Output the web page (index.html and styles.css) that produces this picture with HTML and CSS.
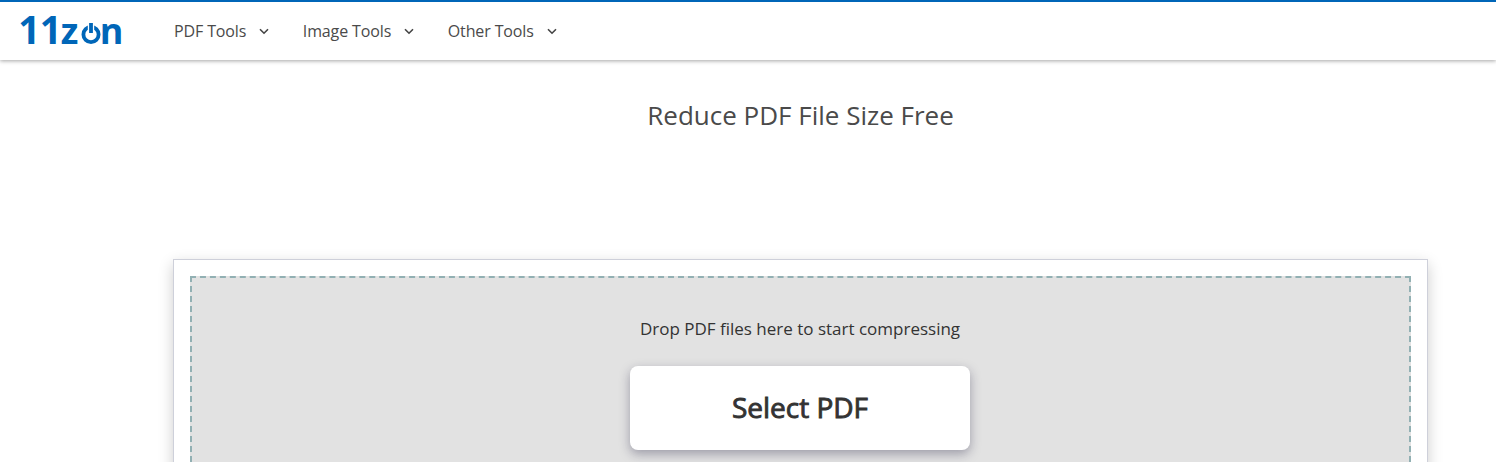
FILE: index.html
```html
<!DOCTYPE html>
<html lang="en">
<head>
  <meta charset="UTF-8" />
  <meta name="viewport" content="width=device-width, initial-scale=1.0"/>
  <title>Reduce PDF File Size Free</title>
  <link rel="stylesheet" href="styles.css">
</head>
<body>
  <header class="navbar">
    <a class="logo" href="#">
      <svg width="114" height="58" viewBox="0 0 114 58">
        <text class="logo-digit" x="4.2" y="42">1</text>
        <text class="logo-digit" x="25.8" y="42">1</text>
        <text class="logo-letter" x="46.8" y="42">z</text>
        <!-- power button -->
        <circle class="logo-power" cx="77" cy="32.5" r="7.6"/>
        <path class="logo-gap" d="M77 20V31"/>
        <path class="logo-power" d="M77 21V31"/>
        <text class="logo-letter" x="85.8" y="42">n</text>
      </svg>
    </a>
    <nav class="menu">
      <a class="menu-item" href="#">PDF Tools
        <svg class="chevron" width="10" height="7" viewBox="0 0 10 7"><path d="M1 1.2L5 5.2L9 1.2"/></svg>
      </a>
      <a class="menu-item" href="#">Image Tools
        <svg class="chevron" width="10" height="7" viewBox="0 0 10 7"><path d="M1 1.2L5 5.2L9 1.2"/></svg>
      </a>
      <a class="menu-item" href="#">Other Tools
        <svg class="chevron" width="10" height="7" viewBox="0 0 10 7"><path d="M1 1.2L5 5.2L9 1.2"/></svg>
      </a>
    </nav>
  </header>

  <main class="container">
    <h1>Reduce PDF File Size Free</h1>
    <div class="panel">
      <div class="drop-area">
        <p class="drop-text">Drop PDF files here to start compressing</p>
        <button class="select-btn">Select PDF</button>
      </div>
    </div>
  </main>
</body>
</html>
```
FILE: styles.css
```css
:root {
  --primary: #0066b8;
  --text: #4a4a4a;
}
* {
  box-sizing: border-box;
  font-family: "Open Sans", sans-serif;
}
body {
  margin: 0;
  height: 462px;
  overflow: hidden;
  background: #fff;
  color: var(--text);
}
.navbar {
  display: flex;
  align-items: center;
  height: 60px;
  padding-left: 14px;
  border-top: 2px solid var(--primary);
  box-shadow: 0 1px 4px rgba(0, 0, 0, 0.36);
}
.logo {
  display: flex;
  width: 160px;
}
.logo-digit {
  font-size: 38.5px;
  font-weight: 700;
  fill: var(--primary);
}
.logo-letter {
  font-size: 36px;
  font-weight: 700;
  fill: var(--primary);
}
.logo-power {
  fill: none;
  stroke: var(--primary);
  stroke-width: 3.8;
}
.logo-gap {
  stroke: #fff;
  stroke-width: 6.4;
}
.menu {
  display: flex;
  gap: 33.5px;
}
.menu-item {
  display: flex;
  align-items: center;
  gap: 13px;
  font-size: 16px;
  letter-spacing: -0.12px;
  color: var(--text);
  text-decoration: none;
}
.chevron {
  fill: none;
  stroke: #444;
  stroke-width: 1.6;
}
.container {
  width: 1255px;
  margin-left: 173px;
}
h1 {
  margin: 37px 0 125px;
  font-size: 26px;
  font-weight: 400;
  line-height: 37px;
  text-align: center;
}
.panel {
  height: 400px;
  padding: 16px;
  border: 1px solid #ced0da;
  box-shadow: 0 5px 14px rgba(0, 0, 0, 0.2);
}
.drop-area {
  display: flex;
  flex-direction: column;
  align-items: center;
  height: 366px;
  padding: 39px 1px 0 0;
  border: 2px dashed #92b0b3;
  background: #e2e2e2;
}
.drop-text {
  margin: 0 0 25px;
  font-size: 17px;
  line-height: 24px;
  color: #333;
}
.select-btn {
  width: 340px;
  height: 84px;
  padding: 0 0 2px;
  border: none;
  border-radius: 8px;
  background: #fff;
  box-shadow: 0 4px 11px rgba(30, 25, 60, 0.35);
  font-size: 28px;
  font-weight: 400;
  -webkit-text-stroke: 0.9px #333;
  color: #333;
  cursor: pointer;
}
```
